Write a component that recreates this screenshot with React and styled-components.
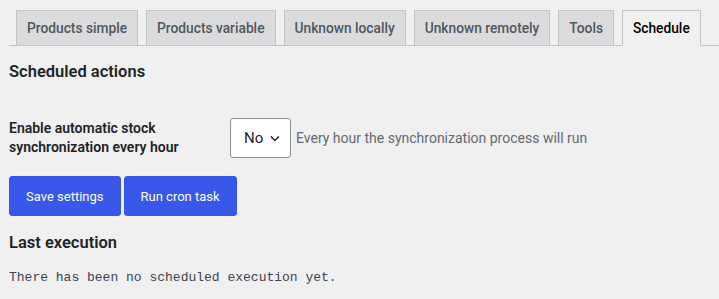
import styled, { createGlobalStyle } from "styled-components";

const GlobalStyle = createGlobalStyle`
	body {
		margin: 0;
		background: #f0f0f1;
		font-family: Roboto, "Liberation Sans", sans-serif;
		color: #1d2327;
	}
`;

const Page = styled.div`
	padding: 0 9px;
`;

const TabBar = styled.nav`
	display: flex;
	padding-top: 10px;
	padding-left: 7px;
	gap: 8px;
	border-bottom: 1px solid #c3c4c7;
	margin-right: -9px;
`;

const Tab = styled.a`
	display: block;
	padding: 5px 10px;
	font-size: 13.75px;
	line-height: 24px;
	font-weight: 500;
	border: 1px solid #c3c4c7;
	margin-bottom: -1px;
	text-decoration: none;
	white-space: nowrap;
	background: ${(props) => (props.active ? "#f0f0f1" : "#dcdcde")};
	border-bottom-color: ${(props) => (props.active ? "#f0f0f1" : "#c3c4c7")};
	color: ${(props) => (props.active ? "#000" : "#50575e")};
`;

const Title = styled.h2`
	font-size: 16.5px;
	font-weight: 600;
	line-height: 22px;
	margin: ${(props) => props.top || "15px"} 0 0;
`;

const FormRow = styled.div`
	display: flex;
	align-items: center;
	margin-top: 35px;
`;

const Label = styled.div`
	width: 210px;
	padding-right: 11px;
	font-size: 14px;
	font-weight: 600;
	line-height: 19px;
`;

const Select = styled.div`
	display: flex;
	align-items: center;
	box-sizing: border-box;
	width: 61px;
	height: 40px;
	padding: 0 10px 0 13px;
	gap: 7px;
	background: #fff;
	border: 1px solid #8c8f94;
	border-radius: 3px;
	font-size: 15px;
	color: #1d2327;
`;

const Help = styled.span`
	margin-left: 5px;
	font-size: 14px;
	color: #646970;
`;

const Buttons = styled.div`
	display: flex;
	gap: 3px;
	margin-top: 18px;
`;

const Button = styled.button`
	height: 40px;
	padding: 0 16px;
	background: #3858e9;
	color: #fff;
	border: 1px solid #3858e9;
	border-radius: 3px;
	font-family: Roboto, "Liberation Sans", sans-serif;
	font-size: 13px;
`;

const Code = styled.p`
	margin: 16px 0 0;
	font-family: "Liberation Mono", "DejaVu Sans Mono", monospace;
	font-size: 13px;
	color: #3c434a;
`;

function App() {
	const tabs = [
		"Products simple",
		"Products variable",
		"Unknown locally",
		"Unknown remotely",
		"Tools",
		"Schedule",
	];
	return (
		<Page>
			<GlobalStyle />
			<TabBar>
				{tabs.map((t) => (
					<Tab key={t} active={t === "Schedule"}>
						{t}
					</Tab>
				))}
			</TabBar>
			<Title>Scheduled actions</Title>
			<FormRow>
				<Label>
					Enable automatic stock
					<br />
					synchronization every hour
				</Label>
				<Select>
					No
					<svg width="11" height="7" viewBox="0 0 11 7">
						<path d="M1 1.2l4.5 4.5 4.5-4.5" fill="none" stroke="#1d2327" strokeWidth="1.8" />
					</svg>
				</Select>
				<Help>Every hour the synchronization process will run</Help>
			</FormRow>
			<Buttons>
				<Button>Save settings</Button>
				<Button>Run cron task</Button>
			</Buttons>
			<Title as="h3" top="16px">
				Last execution
			</Title>
			<Code>There has been no scheduled execution yet.</Code>
		</Page>
	);
}

export default App;
